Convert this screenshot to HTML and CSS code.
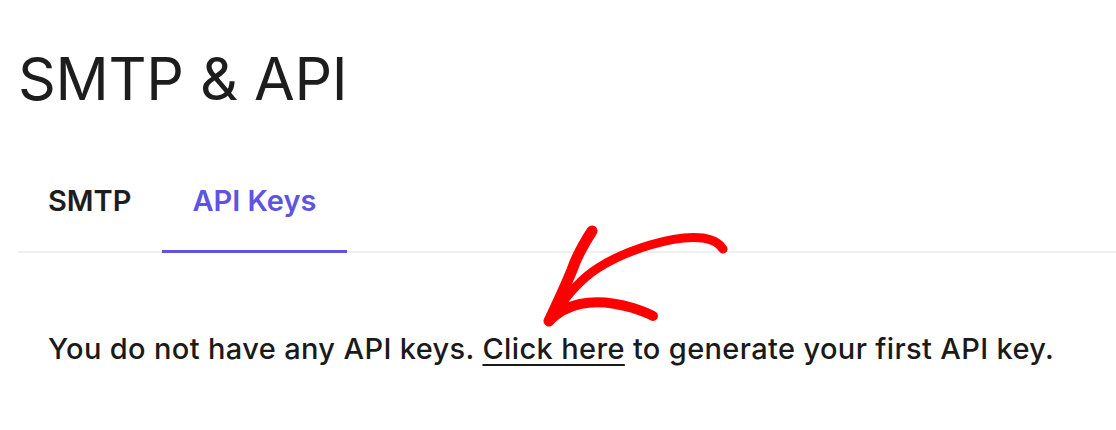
FILE: index.html
```html
<!DOCTYPE html>
<html lang="en">
<head>
  <meta charset="UTF-8">
  <title>SMTP &amp; API</title>
  <link rel="stylesheet" href="styles.css">
</head>
<body>
  <div class="page">
    <h1 class="page-title">SMTP &amp; API</h1>

    <!-- Tabs -->
    <div class="tabs">
      <a class="tab" href="#">SMTP</a>
      <a class="tab tab-active" href="#">API Keys</a>
    </div>

    <div class="tab-body">
      <p class="empty-note">You do not have any API keys. <a href="#">Click here</a> to generate your first API key.</p>
    </div>
  </div>

  <!-- hand drawn arrow pointing at the link -->
  <svg class="scribble" width="1116" height="430" viewBox="0 0 1116 430">
    <g fill="none" stroke="#ff0000" stroke-linecap="round" stroke-linejoin="round">
      <path d="M592 231 C583 245 576 258 572 270 C566 285 559 300 549 321" stroke-width="11"/>
      <path d="M723 249 C719 243 714 240 703 238 C688 236 670 239 650 245 C630 251 612 259 598 268 C584 277 570 290 549 321" stroke-width="9"/>
      <path d="M549 321 C556 314 566 307 580 304 C598 300 616 303 633 308 C642 311 648 313 653 316" stroke-width="10"/>
    </g>
  </svg>
</body>
</html>
```

FILE: styles.css
```css
/* General */
body {
  margin: 0;
  background-color: #ffffff;
  font-family: "Inter", "Liberation Sans", Arial, sans-serif;
  color: #1d1d1f;
}

.page {
  padding: 44px 0 0 18px;
}

.page-title {
  margin: 0;
  font-size: 59px;
  font-weight: 400;
  line-height: 1.2;
  letter-spacing: -0.3px;
  color: #1d1d1d;
}

/* Tabs */
.tabs {
  display: flex;
  margin-top: 68px;
  border-bottom: 2px solid #eeeeee;
}

.tab {
  padding: 0 31px 32px 30px;
  font-size: 29px;
  font-weight: 600;
  color: #1d1d1d;
  text-decoration: none;
  margin-bottom: -2px;
  border-bottom: 3px solid transparent;
}

.tab-active {
  color: #5d54e2;
  border-bottom-color: #5d54e2;
}

.tab-body {
  padding: 78px 30px 0 30px;
}

.empty-note {
  margin: 0;
  font-size: 29px;
  font-weight: 500;
  letter-spacing: 0.36px;
  color: #1a1a1a;
}

.empty-note a {
  color: #1a1a1a;
  text-decoration: underline;
  text-underline-offset: 5px;
  text-decoration-thickness: 2px;
}

/* Arrow annotation, drawn over the page */
.scribble {
  position: absolute;
  left: 0;
  top: 0;
  pointer-events: none;
}
```
